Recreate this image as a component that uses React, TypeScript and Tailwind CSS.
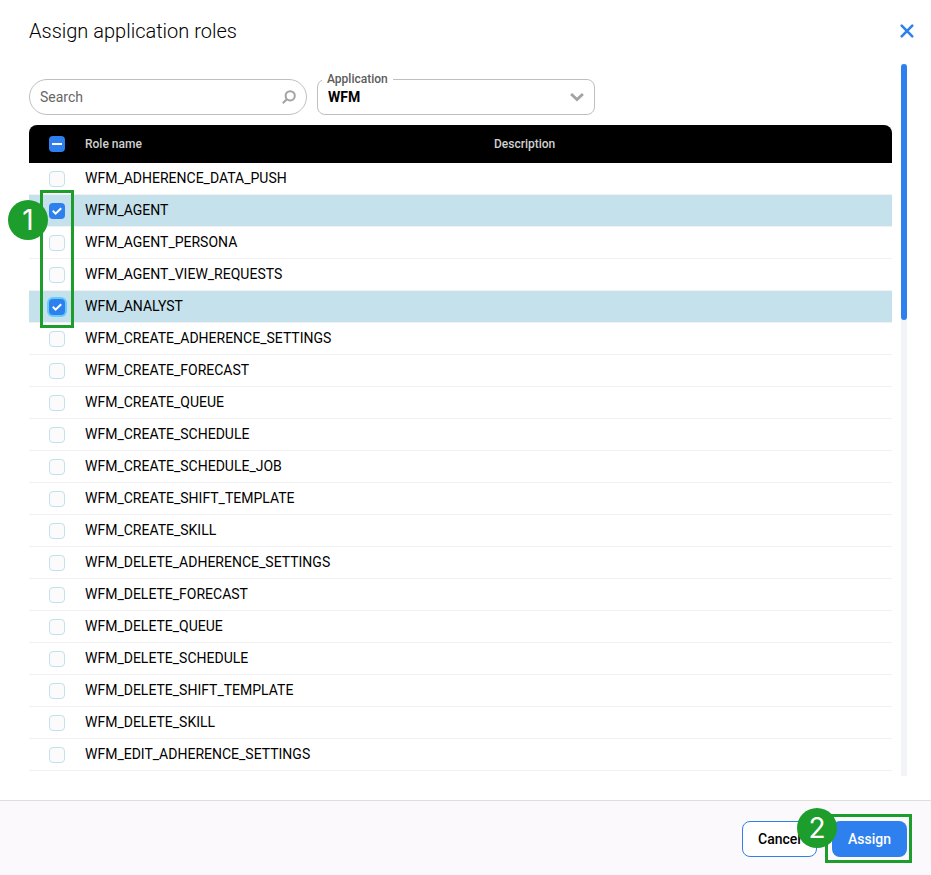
import React, { useEffect, useRef, useState } from "react";

const ROLES = [
  "WFM_ADHERENCE_DATA_PUSH",
  "WFM_AGENT",
  "WFM_AGENT_PERSONA",
  "WFM_AGENT_VIEW_REQUESTS",
  "WFM_ANALYST",
  "WFM_CREATE_ADHERENCE_SETTINGS",
  "WFM_CREATE_FORECAST",
  "WFM_CREATE_QUEUE",
  "WFM_CREATE_SCHEDULE",
  "WFM_CREATE_SCHEDULE_JOB",
  "WFM_CREATE_SHIFT_TEMPLATE",
  "WFM_CREATE_SKILL",
  "WFM_DELETE_ADHERENCE_SETTINGS",
  "WFM_DELETE_FORECAST",
  "WFM_DELETE_QUEUE",
  "WFM_DELETE_SCHEDULE",
  "WFM_DELETE_SHIFT_TEMPLATE",
  "WFM_DELETE_SKILL",
  "WFM_EDIT_ADHERENCE_SETTINGS",
];

interface TickBoxProps {
  label: string;
  checked: boolean;
  indeterminate?: boolean;
  highlighted?: boolean;
  onChange: () => void;
}

function TickBox({ label, checked, indeterminate = false, highlighted = false, onChange }: TickBoxProps) {
  const ref = useRef<HTMLInputElement>(null);

  useEffect(() => {
    if (ref.current) ref.current.indeterminate = indeterminate;
  }, [indeterminate]);

  const filled = checked || indeterminate;

  return (
    <span className="relative block size-4">
      <input
        ref={ref}
        type="checkbox"
        aria-label={label}
        checked={checked}
        onChange={onChange}
        className={`block size-4 appearance-none rounded outline-none ${
          filled ? "bg-[#2e80ee]" : "border border-[#c3e1ec] bg-[#fcfbfc]"
        } ${highlighted ? "ring-2 ring-[#66ccfb]" : ""}`}
      />
      {filled && (
        <svg viewBox="0 0 16 16" className="pointer-events-none absolute inset-0 size-4" fill="none" stroke="#fff" strokeWidth="2">
          {indeterminate ? <path d="M3 8h10" /> : <path d="M3.8 7.8l2.8 2.8 5.6-5.4" />}
        </svg>
      )}
    </span>
  );
}

function StepBadge({ step, className }: { step: number; className: string }) {
  return (
    <span
      className={`absolute flex size-10 items-center justify-center rounded-full bg-[#1d9d2c] font-[Inter,sans-serif] text-[28px] text-white ${className}`}
    >
      {step}
    </span>
  );
}

export default function App() {
  const [query, setQuery] = useState("");
  const [application, setApplication] = useState("WFM");
  const [selected, setSelected] = useState<string[]>(["WFM_AGENT", "WFM_ANALYST"]);
  const [lastToggled, setLastToggled] = useState("WFM_ANALYST");

  const visible = ROLES.filter((role) => role.toLowerCase().includes(query.toLowerCase()));
  const allSelected = selected.length === ROLES.length;

  const toggle = (role: string) => {
    setSelected((prev) => (prev.includes(role) ? prev.filter((r) => r !== role) : [...prev, role]));
    setLastToggled(role);
  };

  const toggleAll = () => {
    setSelected(allSelected ? [] : ROLES);
    setLastToggled("");
  };

  return (
    <div className="flex min-h-screen flex-col bg-white font-[Roboto,sans-serif] text-sm text-black">
      {/* Header */}
      <header className="flex h-16 items-center justify-between pr-4 pb-0.5 pl-[29px]">
        <h1 className="text-xl font-light">Assign application roles</h1>
        <button type="button" aria-label="Close" className="flex size-4 items-center justify-center text-[#2e80ee]">
          <svg viewBox="0 0 16 16" className="size-4" fill="none" stroke="currentColor" strokeWidth="2.6" strokeLinecap="round">
            <path d="M2.7 2.7l10.6 10.6M13.3 2.7L2.7 13.3" />
          </svg>
        </button>
      </header>

      <main className="flex flex-1 gap-[9px] pr-6 pb-6 pl-[29px]">
        <div className="min-w-0 flex-1 pt-[15px]">
          {/* Filters */}
          <div className="flex gap-2.5">
            <div className="relative w-[278px]">
              <input
                type="text"
                aria-label="Search"
                placeholder="Search"
                value={query}
                onChange={(e) => setQuery(e.target.value)}
                className="h-9 w-full rounded-full border border-[#bfbfbf] pr-9 pl-2.5 outline-none placeholder:text-[#666]"
              />
              <svg viewBox="0 0 16 16" className="pointer-events-none absolute top-2.5 right-2.5 size-4" fill="none" stroke="#a3a3a3" strokeWidth="2">
                <circle cx="9.2" cy="6.8" r="4.6" />
                <path d="M6 10L1.8 14.2" />
              </svg>
            </div>

            <div className="relative w-[278px]">
              <label htmlFor="application" className="absolute -top-2 left-[5px] bg-white px-[5px] text-xs font-medium text-[#5c5c5c]">
                Application
              </label>
              <select
                id="application"
                value={application}
                onChange={(e) => setApplication(e.target.value)}
                className="h-9 w-full appearance-none rounded-lg border border-[#bfbfbf] bg-transparent pr-9 pl-2.5 font-bold outline-none"
              >
                <option value="WFM">WFM</option>
              </select>
              <svg viewBox="0 0 16 16" className="pointer-events-none absolute top-2.5 right-2.5 size-4" fill="none" stroke="#a3a3a3" strokeWidth="2.8">
                <path d="M2.1 5L8 10.6 13.9 5" />
              </svg>
            </div>
          </div>

          {/* Role table */}
          <div className="relative mt-2.5">
            <table className="w-full table-fixed border-separate border-spacing-0 text-left">
              <thead>
                <tr className="h-[38px] text-xs text-[#d0d0d0]">
                  <th className="w-14 rounded-tl-lg bg-black pl-5">
                    <TickBox
                      label="Select all roles"
                      checked={allSelected}
                      indeterminate={selected.length > 0 && !allSelected}
                      onChange={toggleAll}
                    />
                  </th>
                  <th className="w-[409px] bg-black font-medium">Role name</th>
                  <th className="rounded-tr-lg bg-black font-medium">Description</th>
                </tr>
              </thead>
              <tbody>
                {visible.map((role) => {
                  const isSelected = selected.includes(role);
                  return (
                    <tr key={role} className={`h-8 ${isSelected ? "bg-[#c4e1ec]" : ""}`}>
                      <td className="border-b border-[#f1f1f3] pl-5">
                        <TickBox
                          label={role}
                          checked={isSelected}
                          highlighted={isSelected && role === lastToggled}
                          onChange={() => toggle(role)}
                        />
                      </td>
                      <td className="border-b border-[#f1f1f3] pb-0.5">{role}</td>
                      <td className="border-b border-[#f1f1f3] pb-0.5"></td>
                    </tr>
                  );
                })}
              </tbody>
            </table>
            <div className="pointer-events-none absolute top-[65px] left-[11px] h-[138px] w-[34px] border-3 border-[#1d9d2c]" />
            <StepBadge step={1} className="top-[75px] -left-[21px]" />
          </div>
        </div>

        {/* Scroll track */}
        <div className="w-1.5 shrink-0 bg-[#f2f3f6]">
          <div className="h-64 rounded-full bg-[#2e80ee]" />
        </div>
      </main>

      {/* Footer */}
      <footer className="flex justify-end gap-[15px] border-t border-[#dedede] bg-[#fbf9fc] pt-5 pr-6 pb-[18px]">
        <button type="button" className="h-9 w-[75px] rounded-lg border border-[#2e80ee] bg-white font-medium">
          Cancel
        </button>
        <div className="relative">
          <button type="button" className="h-9 w-[75px] rounded-lg bg-[#2e80ee] font-medium text-white">
            Assign
          </button>
          <div className="pointer-events-none absolute -top-[7px] -right-[5px] -bottom-1.5 -left-[7px] border-3 border-[#1d9d2c]" />
          <StepBadge step={2} className="-top-[13px] -left-[35px]" />
        </div>
      </footer>
    </div>
  );
}
